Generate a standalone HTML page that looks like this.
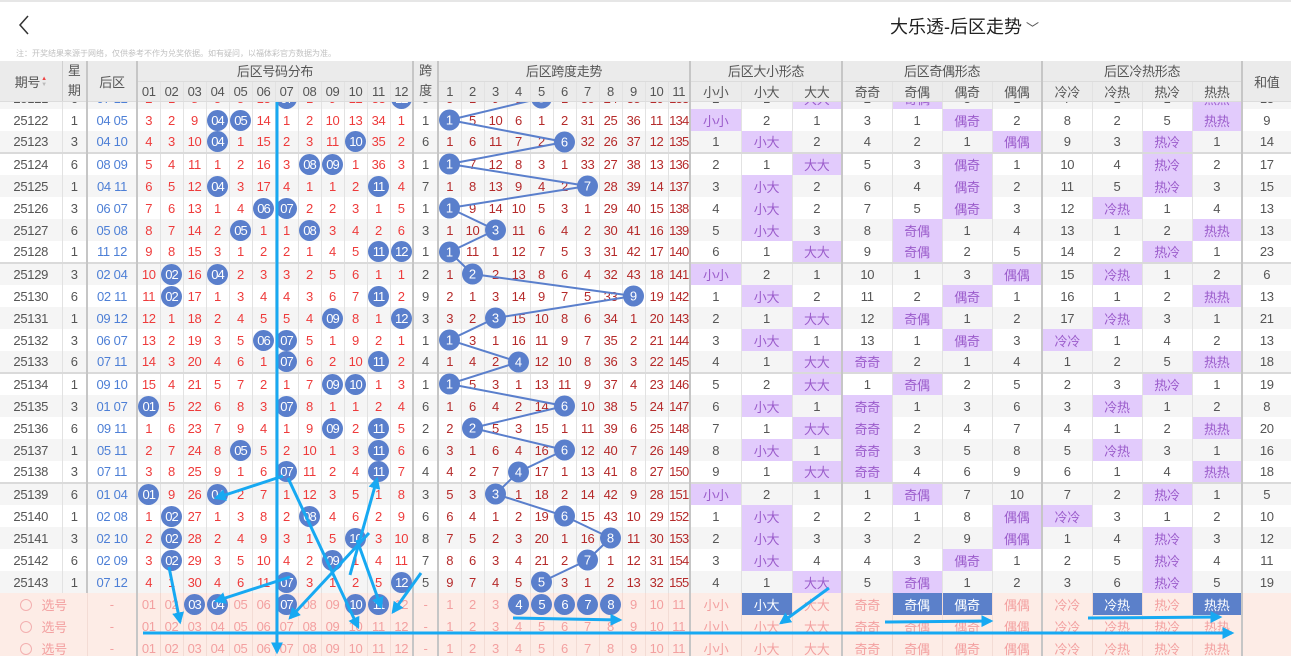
<!DOCTYPE html>
<html><head><meta charset="utf-8">
<style>
*{margin:0;padding:0;box-sizing:border-box}
body{width:1291px;height:656px;overflow:hidden;background:#fff;font-family:"Liberation Sans","Noto Sans CJK SC",sans-serif;position:relative}
.top{position:absolute;left:0;top:0;width:1291px;height:61px;border-top:2px solid #e6e6e6}
.back{position:absolute;left:18px;top:14px}
.title{position:absolute;left:890px;top:11px;font-size:18px;color:#222}
.title i{font-style:normal;font-size:13px;color:#555;margin-left:4px}
.note{position:absolute;left:16px;top:46px;font-size:8px;color:#c0c0c0}
table{border-collapse:collapse;table-layout:fixed;width:1291px}
td{height:22px;text-align:center;font-size:13px;color:#555;border-right:1px solid #e2e2e2;white-space:nowrap;overflow:visible;padding:0;letter-spacing:-0.3px}
.hd{position:absolute;left:0;top:61px}
.hd td{background:#ebebeb;color:#555;height:20px;border-bottom:1px solid #dcdcdc}
.bd{position:absolute;left:0;top:101px;width:1291px;height:555px;overflow:hidden}
.bd table{position:absolute;left:0;top:-14px}
.bd tr:nth-child(odd) td{background:#f5f5f5}
.bd tr:nth-child(even) td{background:#fff}
.bd td:nth-child(3){color:#4d7fd6}
.bd td:nth-child(n+4):nth-child(-n+15){color:#ee3b3b}
.bd td:nth-child(n+17):nth-child(-n+27){color:#b52a2a}
.bd td:nth-child(27){letter-spacing:-0.8px}
.bd tr.g td{border-top:2px solid #dadada}
td.s2{border-right:2px solid #c6c6c6}
.bd td:nth-child(2),.bd td:nth-child(3),.bd td:nth-child(15),.bd td:nth-child(16),.bd td:nth-child(27),.bd td:nth-child(30),.bd td:nth-child(34),.bd td:nth-child(38){border-right:2px solid #c6c6c6}
.bd tr.x td:nth-child(2),.bd tr.x td:nth-child(14),.bd tr.x td:nth-child(15),.bd tr.x td:nth-child(26),.bd tr.x td:nth-child(29),.bd tr.x td:nth-child(33),.bd tr.x td:nth-child(37){border-right:2px solid #c6c6c6}
.bd tr.x td:nth-child(3),.bd tr.x td:nth-child(16),.bd tr.x td:nth-child(27),.bd tr.x td:nth-child(30),.bd tr.x td:nth-child(34),.bd tr.x td:nth-child(38){border-right:1px solid #f0d8d0}
td b{display:inline-block;width:21px;height:21px;line-height:21px;border-radius:50%;background:#5a7fcc;color:#fff;font-weight:normal;font-size:13px;letter-spacing:-1px}
.bd td.p{background:#e2cbfc !important;color:#9b5ccb !important}
.bd tr.x td{background:#fdece6 !important;color:#f3a0a0 !important;border-right-color:#f3dcd5}
.bd tr.x td.q{background:#5b80ca !important;color:#fff !important}
.o{display:inline-block;width:12px;height:12px;border:1px solid #f3b0b0;border-radius:50%;vertical-align:-1px;margin-right:10px}
svg{position:absolute;left:0;top:0}
.sort{display:inline-block;font-size:6px;line-height:6px;vertical-align:1px;margin-left:1px}
</style></head><body>
<div class="top"><svg class="back" width="12" height="20" viewBox="0 0 12 20" style="position:absolute;left:18px;top:13px"><path d="M10,1L2,10L10,19" fill="none" stroke="#333" stroke-width="1.5"/></svg><div class="title">大乐透-后区走势<i>﹀</i></div><div class="note">注：开奖结果来源于网络，仅供参考不作为兑奖依据。如有疑问，以福体彩官方数据为准。</div></div>

<div class="bd"><table>
<colgroup><col style="width:62px"><col style="width:25px"><col style="width:50px"><col span="12" style="width:23px"><col style="width:25px"><col span="10" style="width:23px"><col style="width:22px"><col style="width:51px"><col style="width:51px"><col style="width:50px"><col span="8" style="width:50px"><col style="width:49px"></colgroup>
<tr><td>25121</td><td>6</td><td>07 12</td><td>2</td><td>1</td><td>8</td><td>5</td><td>5</td><td>13</td><td><b>07</b></td><td>1</td><td>9</td><td>12</td><td>33</td><td><b>12</b></td><td>5</td><td>5</td><td>1</td><td>9</td><td>5</td><td></td><td>1</td><td>30</td><td>24</td><td>35</td><td>10</td><td>133</td><td>2</td><td>1</td><td class=p>大大</td><td>2</td><td class=p>奇偶</td><td>3</td><td>1</td><td>7</td><td>1</td><td>1</td><td class=p>热热</td><td>13</td></tr>
<tr><td>25122</td><td>1</td><td>04 05</td><td>3</td><td>2</td><td>9</td><td><b>04</b></td><td><b>05</b></td><td>14</td><td>1</td><td>2</td><td>10</td><td>13</td><td>34</td><td>1</td><td>1</td><td></td><td>5</td><td>10</td><td>6</td><td>1</td><td>2</td><td>31</td><td>25</td><td>36</td><td>11</td><td>134</td><td class=p>小小</td><td>2</td><td>1</td><td>3</td><td>1</td><td class=p>偶奇</td><td>2</td><td>8</td><td>2</td><td>5</td><td class=p>热热</td><td>9</td></tr>
<tr><td>25123</td><td>3</td><td>04 10</td><td>4</td><td>3</td><td>10</td><td><b>04</b></td><td>1</td><td>15</td><td>2</td><td>3</td><td>11</td><td><b>10</b></td><td>35</td><td>2</td><td>6</td><td>1</td><td>6</td><td>11</td><td>7</td><td>2</td><td></td><td>32</td><td>26</td><td>37</td><td>12</td><td>135</td><td>1</td><td class=p>小大</td><td>2</td><td>4</td><td>2</td><td>1</td><td class=p>偶偶</td><td>9</td><td>3</td><td class=p>热冷</td><td>1</td><td>14</td></tr>
<tr class=g><td>25124</td><td>6</td><td>08 09</td><td>5</td><td>4</td><td>11</td><td>1</td><td>2</td><td>16</td><td>3</td><td><b>08</b></td><td><b>09</b></td><td>1</td><td>36</td><td>3</td><td>1</td><td></td><td>7</td><td>12</td><td>8</td><td>3</td><td>1</td><td>33</td><td>27</td><td>38</td><td>13</td><td>136</td><td>2</td><td>1</td><td class=p>大大</td><td>5</td><td>3</td><td class=p>偶奇</td><td>1</td><td>10</td><td>4</td><td class=p>热冷</td><td>2</td><td>17</td></tr>
<tr><td>25125</td><td>1</td><td>04 11</td><td>6</td><td>5</td><td>12</td><td><b>04</b></td><td>3</td><td>17</td><td>4</td><td>1</td><td>1</td><td>2</td><td><b>11</b></td><td>4</td><td>7</td><td>1</td><td>8</td><td>13</td><td>9</td><td>4</td><td>2</td><td></td><td>28</td><td>39</td><td>14</td><td>137</td><td>3</td><td class=p>小大</td><td>2</td><td>6</td><td>4</td><td class=p>偶奇</td><td>2</td><td>11</td><td>5</td><td class=p>热冷</td><td>3</td><td>15</td></tr>
<tr><td>25126</td><td>3</td><td>06 07</td><td>7</td><td>6</td><td>13</td><td>1</td><td>4</td><td><b>06</b></td><td><b>07</b></td><td>2</td><td>2</td><td>3</td><td>1</td><td>5</td><td>1</td><td></td><td>9</td><td>14</td><td>10</td><td>5</td><td>3</td><td>1</td><td>29</td><td>40</td><td>15</td><td>138</td><td>4</td><td class=p>小大</td><td>2</td><td>7</td><td>5</td><td class=p>偶奇</td><td>3</td><td>12</td><td class=p>冷热</td><td>1</td><td>4</td><td>13</td></tr>
<tr><td>25127</td><td>6</td><td>05 08</td><td>8</td><td>7</td><td>14</td><td>2</td><td><b>05</b></td><td>1</td><td>1</td><td><b>08</b></td><td>3</td><td>4</td><td>2</td><td>6</td><td>3</td><td>1</td><td>10</td><td></td><td>11</td><td>6</td><td>4</td><td>2</td><td>30</td><td>41</td><td>16</td><td>139</td><td>5</td><td class=p>小大</td><td>3</td><td>8</td><td class=p>奇偶</td><td>1</td><td>4</td><td>13</td><td>1</td><td>2</td><td class=p>热热</td><td>13</td></tr>
<tr><td>25128</td><td>1</td><td>11 12</td><td>9</td><td>8</td><td>15</td><td>3</td><td>1</td><td>2</td><td>2</td><td>1</td><td>4</td><td>5</td><td><b>11</b></td><td><b>12</b></td><td>1</td><td></td><td>11</td><td>1</td><td>12</td><td>7</td><td>5</td><td>3</td><td>31</td><td>42</td><td>17</td><td>140</td><td>6</td><td>1</td><td class=p>大大</td><td>9</td><td class=p>奇偶</td><td>2</td><td>5</td><td>14</td><td>2</td><td class=p>热冷</td><td>1</td><td>23</td></tr>
<tr class=g><td>25129</td><td>3</td><td>02 04</td><td>10</td><td><b>02</b></td><td>16</td><td><b>04</b></td><td>2</td><td>3</td><td>3</td><td>2</td><td>5</td><td>6</td><td>1</td><td>1</td><td>2</td><td>1</td><td></td><td>2</td><td>13</td><td>8</td><td>6</td><td>4</td><td>32</td><td>43</td><td>18</td><td>141</td><td class=p>小小</td><td>2</td><td>1</td><td>10</td><td>1</td><td>3</td><td class=p>偶偶</td><td>15</td><td class=p>冷热</td><td>1</td><td>2</td><td>6</td></tr>
<tr><td>25130</td><td>6</td><td>02 11</td><td>11</td><td><b>02</b></td><td>17</td><td>1</td><td>3</td><td>4</td><td>4</td><td>3</td><td>6</td><td>7</td><td><b>11</b></td><td>2</td><td>9</td><td>2</td><td>1</td><td>3</td><td>14</td><td>9</td><td>7</td><td>5</td><td>33</td><td></td><td>19</td><td>142</td><td>1</td><td class=p>小大</td><td>2</td><td>11</td><td>2</td><td class=p>偶奇</td><td>1</td><td>16</td><td>1</td><td>2</td><td class=p>热热</td><td>13</td></tr>
<tr><td>25131</td><td>1</td><td>09 12</td><td>12</td><td>1</td><td>18</td><td>2</td><td>4</td><td>5</td><td>5</td><td>4</td><td><b>09</b></td><td>8</td><td>1</td><td><b>12</b></td><td>3</td><td>3</td><td>2</td><td></td><td>15</td><td>10</td><td>8</td><td>6</td><td>34</td><td>1</td><td>20</td><td>143</td><td>2</td><td>1</td><td class=p>大大</td><td>12</td><td class=p>奇偶</td><td>1</td><td>2</td><td>17</td><td class=p>冷热</td><td>3</td><td>1</td><td>21</td></tr>
<tr><td>25132</td><td>3</td><td>06 07</td><td>13</td><td>2</td><td>19</td><td>3</td><td>5</td><td><b>06</b></td><td><b>07</b></td><td>5</td><td>1</td><td>9</td><td>2</td><td>1</td><td>1</td><td></td><td>3</td><td>1</td><td>16</td><td>11</td><td>9</td><td>7</td><td>35</td><td>2</td><td>21</td><td>144</td><td>3</td><td class=p>小大</td><td>1</td><td>13</td><td>1</td><td class=p>偶奇</td><td>3</td><td class=p>冷冷</td><td>1</td><td>4</td><td>2</td><td>13</td></tr>
<tr><td>25133</td><td>6</td><td>07 11</td><td>14</td><td>3</td><td>20</td><td>4</td><td>6</td><td>1</td><td><b>07</b></td><td>6</td><td>2</td><td>10</td><td><b>11</b></td><td>2</td><td>4</td><td>1</td><td>4</td><td>2</td><td></td><td>12</td><td>10</td><td>8</td><td>36</td><td>3</td><td>22</td><td>145</td><td>4</td><td>1</td><td class=p>大大</td><td class=p>奇奇</td><td>2</td><td>1</td><td>4</td><td>1</td><td>2</td><td>5</td><td class=p>热热</td><td>18</td></tr>
<tr class=g><td>25134</td><td>1</td><td>09 10</td><td>15</td><td>4</td><td>21</td><td>5</td><td>7</td><td>2</td><td>1</td><td>7</td><td><b>09</b></td><td><b>10</b></td><td>1</td><td>3</td><td>1</td><td></td><td>5</td><td>3</td><td>1</td><td>13</td><td>11</td><td>9</td><td>37</td><td>4</td><td>23</td><td>146</td><td>5</td><td>2</td><td class=p>大大</td><td>1</td><td class=p>奇偶</td><td>2</td><td>5</td><td>2</td><td>3</td><td class=p>热冷</td><td>1</td><td>19</td></tr>
<tr><td>25135</td><td>3</td><td>01 07</td><td><b>01</b></td><td>5</td><td>22</td><td>6</td><td>8</td><td>3</td><td><b>07</b></td><td>8</td><td>1</td><td>1</td><td>2</td><td>4</td><td>6</td><td>1</td><td>6</td><td>4</td><td>2</td><td>14</td><td></td><td>10</td><td>38</td><td>5</td><td>24</td><td>147</td><td>6</td><td class=p>小大</td><td>1</td><td class=p>奇奇</td><td>1</td><td>3</td><td>6</td><td>3</td><td class=p>冷热</td><td>1</td><td>2</td><td>8</td></tr>
<tr><td>25136</td><td>6</td><td>09 11</td><td>1</td><td>6</td><td>23</td><td>7</td><td>9</td><td>4</td><td>1</td><td>9</td><td><b>09</b></td><td>2</td><td><b>11</b></td><td>5</td><td>2</td><td>2</td><td></td><td>5</td><td>3</td><td>15</td><td>1</td><td>11</td><td>39</td><td>6</td><td>25</td><td>148</td><td>7</td><td>1</td><td class=p>大大</td><td class=p>奇奇</td><td>2</td><td>4</td><td>7</td><td>4</td><td>1</td><td>2</td><td class=p>热热</td><td>20</td></tr>
<tr><td>25137</td><td>1</td><td>05 11</td><td>2</td><td>7</td><td>24</td><td>8</td><td><b>05</b></td><td>5</td><td>2</td><td>10</td><td>1</td><td>3</td><td><b>11</b></td><td>6</td><td>6</td><td>3</td><td>1</td><td>6</td><td>4</td><td>16</td><td></td><td>12</td><td>40</td><td>7</td><td>26</td><td>149</td><td>8</td><td class=p>小大</td><td>1</td><td class=p>奇奇</td><td>3</td><td>5</td><td>8</td><td>5</td><td class=p>冷热</td><td>3</td><td>1</td><td>16</td></tr>
<tr><td>25138</td><td>3</td><td>07 11</td><td>3</td><td>8</td><td>25</td><td>9</td><td>1</td><td>6</td><td><b>07</b></td><td>11</td><td>2</td><td>4</td><td><b>11</b></td><td>7</td><td>4</td><td>4</td><td>2</td><td>7</td><td></td><td>17</td><td>1</td><td>13</td><td>41</td><td>8</td><td>27</td><td>150</td><td>9</td><td>1</td><td class=p>大大</td><td class=p>奇奇</td><td>4</td><td>6</td><td>9</td><td>6</td><td>1</td><td>4</td><td class=p>热热</td><td>18</td></tr>
<tr class=g><td>25139</td><td>6</td><td>01 04</td><td><b>01</b></td><td>9</td><td>26</td><td><b>04</b></td><td>2</td><td>7</td><td>1</td><td>12</td><td>3</td><td>5</td><td>1</td><td>8</td><td>3</td><td>5</td><td>3</td><td></td><td>1</td><td>18</td><td>2</td><td>14</td><td>42</td><td>9</td><td>28</td><td>151</td><td class=p>小小</td><td>2</td><td>1</td><td>1</td><td class=p>奇偶</td><td>7</td><td>10</td><td>7</td><td>2</td><td class=p>热冷</td><td>1</td><td>5</td></tr>
<tr><td>25140</td><td>1</td><td>02 08</td><td>1</td><td><b>02</b></td><td>27</td><td>1</td><td>3</td><td>8</td><td>2</td><td><b>08</b></td><td>4</td><td>6</td><td>2</td><td>9</td><td>6</td><td>6</td><td>4</td><td>1</td><td>2</td><td>19</td><td></td><td>15</td><td>43</td><td>10</td><td>29</td><td>152</td><td>1</td><td class=p>小大</td><td>2</td><td>2</td><td>1</td><td>8</td><td class=p>偶偶</td><td class=p>冷冷</td><td>3</td><td>1</td><td>2</td><td>10</td></tr>
<tr><td>25141</td><td>3</td><td>02 10</td><td>2</td><td><b>02</b></td><td>28</td><td>2</td><td>4</td><td>9</td><td>3</td><td>1</td><td>5</td><td><b>10</b></td><td>3</td><td>10</td><td>8</td><td>7</td><td>5</td><td>2</td><td>3</td><td>20</td><td>1</td><td>16</td><td></td><td>11</td><td>30</td><td>153</td><td>2</td><td class=p>小大</td><td>3</td><td>3</td><td>2</td><td>9</td><td class=p>偶偶</td><td>1</td><td>4</td><td class=p>热冷</td><td>3</td><td>12</td></tr>
<tr><td>25142</td><td>6</td><td>02 09</td><td>3</td><td><b>02</b></td><td>29</td><td>3</td><td>5</td><td>10</td><td>4</td><td>2</td><td><b>09</b></td><td>1</td><td>4</td><td>11</td><td>7</td><td>8</td><td>6</td><td>3</td><td>4</td><td>21</td><td>2</td><td></td><td>1</td><td>12</td><td>31</td><td>154</td><td>3</td><td class=p>小大</td><td>4</td><td>4</td><td>3</td><td class=p>偶奇</td><td>1</td><td>2</td><td>5</td><td class=p>热冷</td><td>4</td><td>11</td></tr>
<tr><td>25143</td><td>1</td><td>07 12</td><td>4</td><td>1</td><td>30</td><td>4</td><td>6</td><td>11</td><td><b>07</b></td><td>3</td><td>1</td><td>2</td><td>5</td><td><b>12</b></td><td>5</td><td>9</td><td>7</td><td>4</td><td>5</td><td></td><td>3</td><td>1</td><td>2</td><td>13</td><td>32</td><td>155</td><td>4</td><td>1</td><td class=p>大大</td><td>5</td><td class=p>奇偶</td><td>1</td><td>2</td><td>3</td><td>6</td><td class=p>热冷</td><td>5</td><td>19</td></tr>
<tr class=x><td colspan=2><span class=o></span>选号</td><td>-</td><td>01</td><td>02</td><td><b>03</b></td><td><b>04</b></td><td>05</td><td>06</td><td><b>07</b></td><td>08</td><td>09</td><td><b>10</b></td><td><b>11</b></td><td>12</td><td>-</td><td>1</td><td>2</td><td>3</td><td><b>4</b></td><td><b>5</b></td><td><b>6</b></td><td><b>7</b></td><td><b>8</b></td><td>9</td><td>10</td><td>11</td><td>小小</td><td class=q>小大</td><td>大大</td><td>奇奇</td><td class=q>奇偶</td><td class=q>偶奇</td><td>偶偶</td><td>冷冷</td><td class=q>冷热</td><td>热冷</td><td class=q>热热</td><td></td></tr>
<tr class=x><td colspan=2><span class=o></span>选号</td><td>-</td><td>01</td><td>02</td><td>03</td><td>04</td><td>05</td><td>06</td><td>07</td><td>08</td><td>09</td><td>10</td><td>11</td><td>12</td><td>-</td><td>1</td><td>2</td><td>3</td><td>4</td><td>5</td><td>6</td><td>7</td><td>8</td><td>9</td><td>10</td><td>11</td><td>小小</td><td>小大</td><td>大大</td><td>奇奇</td><td>奇偶</td><td>偶奇</td><td>偶偶</td><td>冷冷</td><td>冷热</td><td>热冷</td><td>热热</td><td></td></tr>
<tr class=x><td colspan=2><span class=o></span>选号</td><td>-</td><td>01</td><td>02</td><td>03</td><td>04</td><td>05</td><td>06</td><td>07</td><td>08</td><td>09</td><td>10</td><td>11</td><td>12</td><td>-</td><td>1</td><td>2</td><td>3</td><td>4</td><td>5</td><td>6</td><td>7</td><td>8</td><td>9</td><td>10</td><td>11</td><td>小小</td><td>小大</td><td>大大</td><td>奇奇</td><td>奇偶</td><td>偶奇</td><td>偶偶</td><td>冷冷</td><td>冷热</td><td>热冷</td><td>热热</td><td></td></tr>
</table>
<svg width="1291" height="555" viewBox="0 101 1291 555">
<polyline fill="none" stroke="#5a7fcc" stroke-width="2" points="541.5,98 449.5,120 564.5,142 449.5,164 587.5,186 449.5,208 495.5,230 449.5,252 472.5,274 633.5,296 495.5,318 449.5,340 518.5,362 449.5,384 564.5,406 472.5,428 564.5,450 518.5,472 495.5,494 564.5,516 610.5,538 587.5,560 541.5,582"/>
<g fill="#5a7fcc"><circle cx="541.5" cy="98" r="10.5"/><circle cx="449.5" cy="120" r="10.5"/><circle cx="564.5" cy="142" r="10.5"/><circle cx="449.5" cy="164" r="10.5"/><circle cx="587.5" cy="186" r="10.5"/><circle cx="449.5" cy="208" r="10.5"/><circle cx="495.5" cy="230" r="10.5"/><circle cx="449.5" cy="252" r="10.5"/><circle cx="472.5" cy="274" r="10.5"/><circle cx="633.5" cy="296" r="10.5"/><circle cx="495.5" cy="318" r="10.5"/><circle cx="449.5" cy="340" r="10.5"/><circle cx="518.5" cy="362" r="10.5"/><circle cx="449.5" cy="384" r="10.5"/><circle cx="564.5" cy="406" r="10.5"/><circle cx="472.5" cy="428" r="10.5"/><circle cx="564.5" cy="450" r="10.5"/><circle cx="518.5" cy="472" r="10.5"/><circle cx="495.5" cy="494" r="10.5"/><circle cx="564.5" cy="516" r="10.5"/><circle cx="610.5" cy="538" r="10.5"/><circle cx="587.5" cy="560" r="10.5"/><circle cx="541.5" cy="582" r="10.5"/></g>
<g fill="#fff" font-size="13" text-anchor="middle" font-family="Liberation Sans,sans-serif"><text x="541.5" y="102.5">5</text><text x="449.5" y="124.5">1</text><text x="564.5" y="146.5">6</text><text x="449.5" y="168.5">1</text><text x="587.5" y="190.5">7</text><text x="449.5" y="212.5">1</text><text x="495.5" y="234.5">3</text><text x="449.5" y="256.5">1</text><text x="472.5" y="278.5">2</text><text x="633.5" y="300.5">9</text><text x="495.5" y="322.5">3</text><text x="449.5" y="344.5">1</text><text x="518.5" y="366.5">4</text><text x="449.5" y="388.5">1</text><text x="564.5" y="410.5">6</text><text x="472.5" y="432.5">2</text><text x="564.5" y="454.5">6</text><text x="518.5" y="476.5">4</text><text x="495.5" y="498.5">3</text><text x="564.5" y="520.5">6</text><text x="610.5" y="542.5">8</text><text x="587.5" y="564.5">7</text><text x="541.5" y="586.5">5</text></g>
<defs><marker id="a" viewBox="0 0 10 10" refX="8" refY="5" markerWidth="4" markerHeight="4" orient="auto"><path d="M0,0L10,5L0,10z" fill="#17a9f2"/></marker></defs>
<g stroke="#17a9f2" stroke-width="3" fill="none" marker-end="url(#a)">
<line x1="277" y1="101" x2="277" y2="652"/>
<line x1="143" y1="633" x2="1232" y2="633"/>
<line x1="283" y1="476" x2="216" y2="498"/>
<line x1="290" y1="577" x2="216" y2="601"/>
<line x1="288" y1="478" x2="358" y2="627"/>
<line x1="369" y1="533" x2="290" y2="618"/>
<line x1="350" y1="575" x2="377" y2="479"/>
<line x1="357" y1="540" x2="381" y2="607"/>
<line x1="169" y1="567" x2="180" y2="622"/>
<line x1="421" y1="573" x2="393" y2="612"/>
<line x1="513" y1="618" x2="620" y2="620"/>
<line x1="829" y1="588" x2="781" y2="623"/>
<line x1="885" y1="622" x2="991" y2="621"/>
<line x1="1088" y1="618" x2="1220" y2="617"/>
</g>
</svg>
</div>

<table class="hd">
<colgroup><col style="width:62px"><col style="width:25px"><col style="width:50px"><col span="12" style="width:23px"><col style="width:25px"><col span="10" style="width:23px"><col style="width:22px"><col style="width:51px"><col style="width:51px"><col style="width:50px"><col span="8" style="width:50px"><col style="width:49px"></colgroup>
<tr><td rowspan=2 style="border-right:1px solid #d0d0d0">期号<span class="sort"><span style="color:#e44">▲</span><br><span style="color:#bbb">▼</span></span></td><td rowspan=2 class=s2 style="line-height:20px">星<br>期</td><td rowspan=2 class=s2>后区</td><td colspan=12 class=s2>后区号码分布</td><td rowspan=2 class=s2 style="line-height:20px">跨<br>度</td><td colspan=11 class=s2>后区跨度走势</td><td colspan=3 class=s2>后区大小形态</td><td colspan=4 class=s2>后区奇偶形态</td><td colspan=4 class=s2>后区冷热形态</td><td rowspan=2>和值</td></tr>
<tr><td>01</td><td>02</td><td>03</td><td>04</td><td>05</td><td>06</td><td>07</td><td>08</td><td>09</td><td>10</td><td>11</td><td class=s2>12</td><td>1</td><td>2</td><td>3</td><td>4</td><td>5</td><td>6</td><td>7</td><td>8</td><td>9</td><td>10</td><td class=s2>11</td><td>小小</td><td>小大</td><td class=s2>大大</td><td>奇奇</td><td>奇偶</td><td>偶奇</td><td class=s2>偶偶</td><td>冷冷</td><td>冷热</td><td>热冷</td><td class=s2>热热</td></tr>
</table>
</body></html>
